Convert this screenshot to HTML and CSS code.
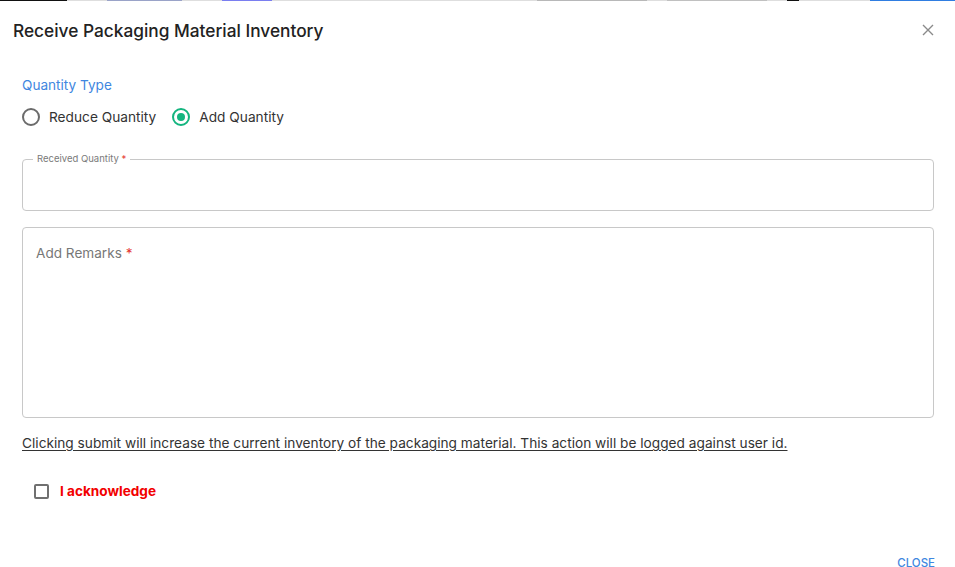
FILE: index.html
```html
<!DOCTYPE html>
<html lang="en">
<head>
<meta charset="UTF-8" />
<meta name="viewport" content="width=device-width, initial-scale=1" />
<title>Receive Packaging Material Inventory</title>
<link rel="stylesheet" href="styles.css">
</head>
<body>
<div class="backdrop-strip">
  <span class="seg dark"></span>
  <span class="seg link"></span>
  <span class="seg link2"></span>
  <span class="seg grey"></span>
  <span class="seg grey2"></span>
  <span class="seg dark small"></span>
  <span class="seg blue"></span>
</div>
<div class="dialog">
  <div class="dialog-head">
    <h2>Receive Packaging Material Inventory</h2>
    <button class="close-x" aria-label="close">
      <svg viewBox="0 0 12 12" width="12" height="12"><path d="M1 1 L11 11 M11 1 L1 11" stroke="#8a8a8a" stroke-width="1.4" fill="none"/></svg>
    </button>
  </div>

  <div class="dialog-body">
    <p class="group-label">Quantity Type</p>
    <div class="radios">
      <label class="radio"><span class="dot"></span>Reduce Quantity</label>
      <label class="radio checked"><span class="dot"></span>Add Quantity</label>
    </div>

    <fieldset class="field qty">
      <legend>Received Quantity <span class="req">*</span></legend>
    </fieldset>

    <div class="field remarks">
      <span class="placeholder">Add Remarks <span class="req">*</span></span>
    </div>

    <p class="note">Clicking submit will increase the current inventory of the packaging material. This action will be logged against user id.</p>

    <label class="ack"><span class="box"></span>I acknowledge</label>
  </div>

  <div class="dialog-foot">
    <button class="text-btn">CLOSE</button>
  </div>
</div>
</body>
</html>
```

FILE: styles.css
```css
body {
  margin: 0;
  padding: 0;
  background: #fff;
  font-family: Inter, "Open Sans", sans-serif;
  color: #333;
  overflow: hidden;
}
.backdrop-strip {
  display: flex;
  height: 1px;
  background: #dedede;
}
.seg { display: block; height: 1px; }
.seg.dark { width: 67px; background: #111; }
.seg.link { width: 75px; margin-left: 40px; background: #9aa3c8; }
.seg.link2 { width: 50px; margin-left: 40px; background: #7a7ef0; }
.seg.grey { width: 110px; margin-left: 265px; background: #b8b8b8; }
.seg.grey2 { width: 100px; margin-left: 20px; background: #c0c0c0; }
.seg.small { width: 12px; margin-left: 20px; }
.seg.blue { width: 85px; margin-left: auto; background: #2f7de1; }

.dialog {
  background: #fff;
}
.dialog-head {
  display: flex;
  align-items: center;
  justify-content: space-between;
  padding: 17px 20px 0 13px;
  height: 24px;
}
.dialog-head h2 {
  margin: 0;
  font-size: 17.3px;
  font-weight: 500;
  color: #222;
}
.close-x {
  border: none;
  background: none;
  padding: 0;
  width: 14px;
  height: 14px;
  display: flex;
  align-items: center;
  justify-content: center;
  cursor: pointer;
}

.dialog-body {
  padding: 34px 21px 0 22px;
}
.group-label {
  margin: 0;
  color: #3f87e0;
  font-size: 13.6px;
  line-height: 18px;
}
.radios {
  display: flex;
  gap: 16px;
  margin-top: 14px;
  height: 18px;
}
.radio {
  display: flex;
  align-items: center;
  gap: 9px;
  font-size: 13.7px;
  color: #333;
}
.radio .dot {
  width: 14px;
  height: 14px;
  border: 2px solid #6b6b6b;
  border-radius: 50%;
  position: relative;
}
.radio.checked .dot {
  border-color: #14b57f;
}
.radio.checked .dot::after {
  content: "";
  position: absolute;
  inset: 3px;
  border-radius: 50%;
  background: #14b57f;
}

.field {
  border: 1px solid #c8c8c8;
  border-radius: 4px;
  box-sizing: border-box;
}
.qty {
  margin: 28px 0 0;
  padding: 0 10px;
  height: 57px;
}
.qty legend {
  font-size: 9.5px;
  color: #7a7a7a;
  padding: 0 4px;
  line-height: 10px;
}
.req { color: #e53935; }
.remarks {
  margin-top: 16px;
  height: 191px;
  padding: 14px 13px;
}
.placeholder {
  font-size: 13.6px;
  color: #777;
}
.note {
  margin: 17px 0 0;
  font-size: 13.7px;
  color: #333;
  text-decoration: underline;
  text-underline-offset: 2px;
}
.ack {
  display: flex;
  align-items: center;
  gap: 11px;
  margin: 32px 0 0 12px;
  color: #f20000;
  font-weight: 700;
  font-size: 13.6px;
}
.ack .box {
  width: 11px;
  height: 11px;
  border: 2px solid #707070;
  border-radius: 2px;
}

.dialog-foot {
  display: flex;
  justify-content: flex-end;
  padding: 57px 20px 0;
}
.text-btn {
  border: none;
  background: none;
  color: #3f87e0;
  font-family: inherit;
  font-size: 11.5px;
  font-weight: 500;
  padding: 0;
}
```
